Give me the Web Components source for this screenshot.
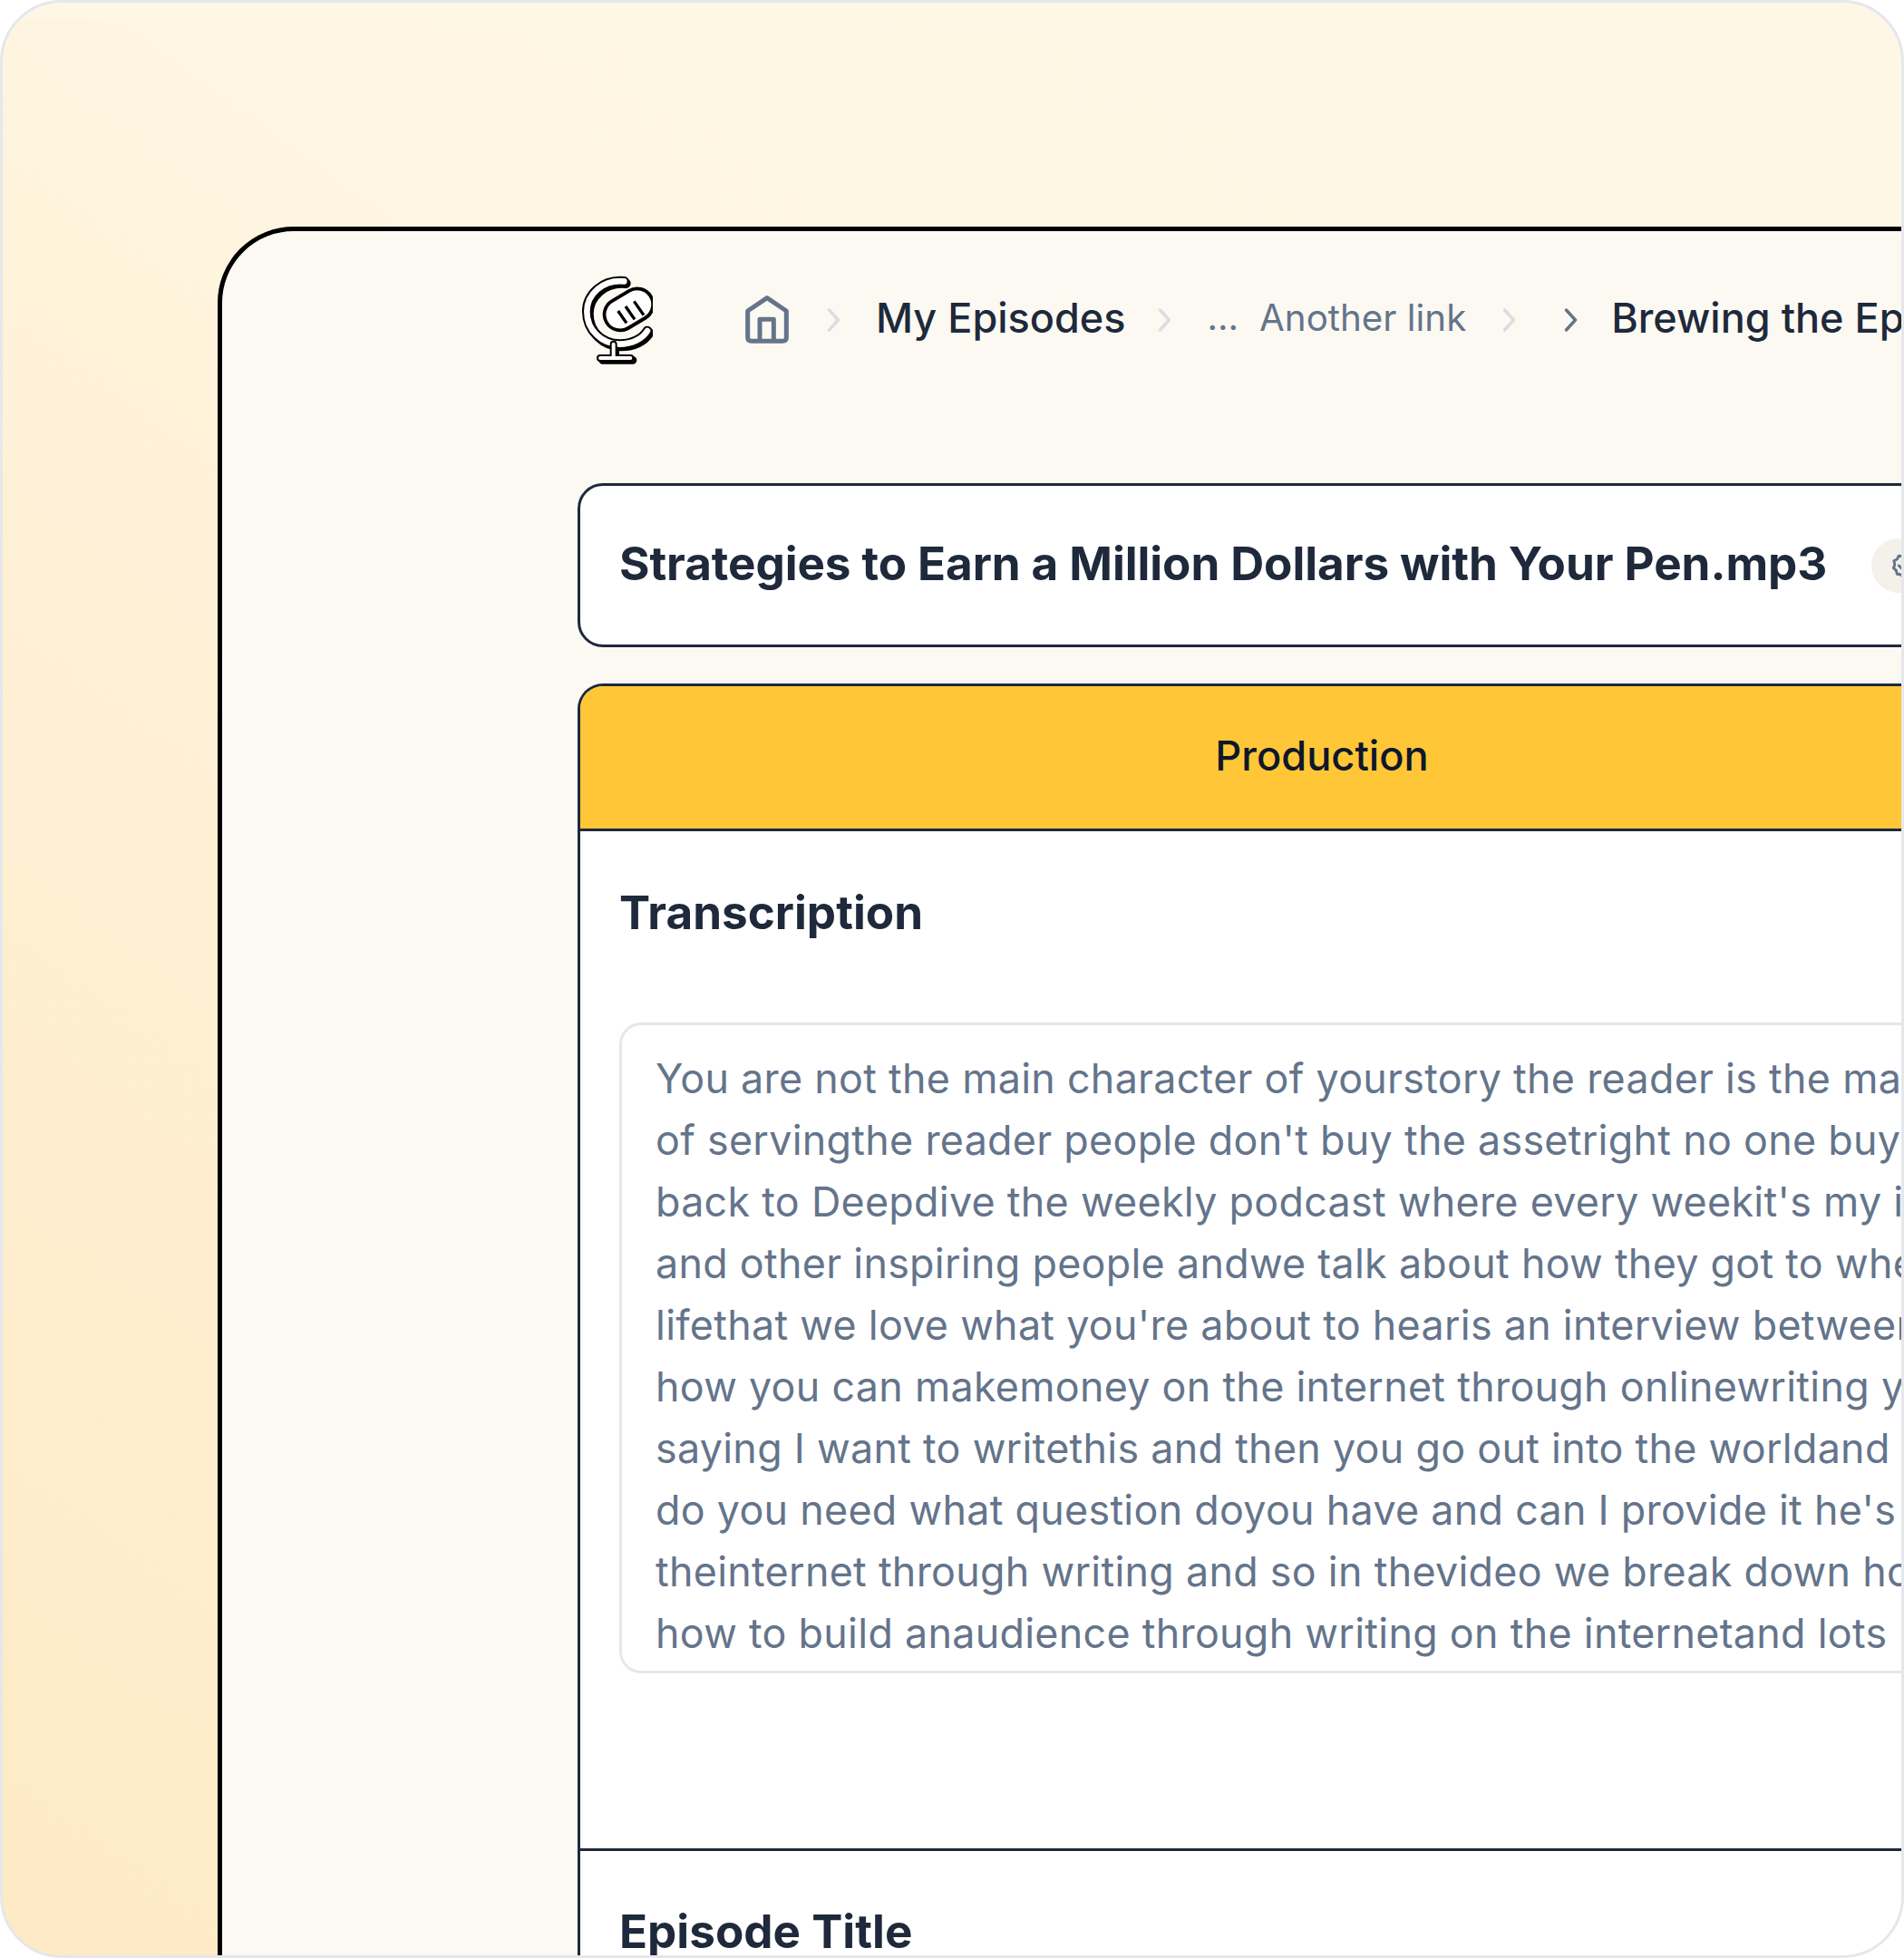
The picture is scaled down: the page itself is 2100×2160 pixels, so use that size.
<!DOCTYPE html>
<html>
	<head>
		<meta charset="utf-8">
		<title>Episode - Production</title>
		<style>
			html, body {
				margin: 0;
				background: #fff;
			}
		</style>
	</head>
	<body>

		<app-frame>
			<app-window>
				<top-nav>
					<nav-crumb tone="strong" slot="first">My Episodes</nav-crumb>
					<nav-crumb tone="muted" slot="second">Another link</nav-crumb>
					<nav-crumb tone="strong" slot="third">Brewing the Episode</nav-crumb>
				</top-nav>
				<file-title>Strategies to Earn a Million Dollars with Your Pen.mp3</file-title>
				<tab-card label="Production">
					<card-section heading="Transcription">
						<transcript-box>
							<span>You are not the main character of yourstory the reader is the main character</span>
							<span>of servingthe reader people don't buy the assetright no one buys the asset</span>
							<span>back to Deepdive the weekly podcast where every weekit's my interview</span>
							<span>and other inspiring people andwe talk about how they got to where</span>
							<span>lifethat we love what you're about to hearis an interview between</span>
							<span>how you can makemoney on the internet through onlinewriting you</span>
							<span>saying I want to writethis and then you go out into the worldand say</span>
							<span>do you need what question doyou have and can I provide it he's</span>
							<span>theinternet through writing and so in thevideo we break down how</span>
							<span>how to build anaudience through writing on the internetand lots</span>
						</transcript-box>
					</card-section>
					<card-section heading="Episode Title"></card-section>
				</tab-card>
			</app-window>
		</app-frame>

		<script>
			const FONT = 'Inter, "Liberation Sans", sans-serif';

			// Small helper so every element sets up its shadow root the same way
			class BaseElement extends HTMLElement {
				constructor () {
					super();
					this.root = this.attachShadow({mode: 'open'});
				}
			}

			class AppFrame extends BaseElement {
				connectedCallback () {
					this.root.innerHTML = `
						<style>
							:host {
								display: block;
								box-sizing: border-box;
								width: 2100px;
								height: 2160px;
								border: 3px solid #e5e7eb;
								border-radius: 68px;
								overflow: hidden;
								font-family: ${FONT};
								background:
									linear-gradient(180deg, #fff7e6 0, #fff7e6 17px, rgba(255,247,230,0) 18px),
									linear-gradient(36deg, #feeac5 0%, #fff0d4 38%, #fff2d9 50%, #fef6e3 62%, #fef7e5 100%);
							}
							.inner {
								padding: 247px 0 0 237px;
							}
						</style>
						<div class="inner"><slot></slot></div>`;
				}
			}

			class AppWindow extends BaseElement {
				connectedCallback () {
					this.root.innerHTML = `
						<style>
							:host {
								display: block;
								box-sizing: border-box;
								width: 2400px;
								height: 2200px;
								border: 5px solid #000;
								border-radius: 84px;
								background: #fcf9f2;
								padding: 48px 0 0 392px;
							}
						</style>
						<slot></slot>`;
				}
			}

			class TopNav extends BaseElement {
				connectedCallback () {
					const chevron = (color, gap) => `
						<svg class="chev" style="margin-right:${gap}px" width="16" height="26" viewBox="0 0 16 26" fill="none" stroke="${color}" stroke-width="3.4" stroke-linecap="round" stroke-linejoin="round"><path d="M2.5 2l10 11-10 11"/></svg>`;
					const arc = 'M205 92C135 85 82 135 82 192c0 62 50 108 108 108 42 0 76-18 92-44';
					this.root.innerHTML = `
						<style>
							:host {
								display: flex;
								align-items: center;
								height: 100px;
								margin-bottom: 130px;
								white-space: nowrap;
							}
							.logo { margin-left: 3px; margin-right: 102px; }
							.home { margin-right: 42px; }
							.chev { flex: none; }
							.dots {
								color: #64748b;
								font-size: 40px;
								margin-right: 23px;
								padding-bottom: 6px;
								line-height: 1;
							}
						</style>
						<svg class="logo" width="80" height="100" viewBox="60 70 240 300" fill="none">
							<g transform="translate(6 7)" stroke="#000" stroke-linecap="round">
								<path d="${arc}" stroke-width="32"/>
								<path d="M170 300v40M128 346h100" stroke-width="26"/>
							</g>
							<path d="${arc}" stroke="#000" stroke-width="32" stroke-linecap="round"/>
							<path d="${arc}" stroke="#fff" stroke-width="20" stroke-linecap="round"/>
							<path d="M170 300v40M126 346h100" stroke="#000" stroke-width="24" stroke-linecap="round"/>
							<path d="M170 300v40M126 346h100" stroke="#fff" stroke-width="12" stroke-linecap="round"/>
							<rect x="-85" y="-52" width="170" height="104" rx="52" transform="translate(224 190) rotate(-31)" fill="#000"/>
							<rect x="-85" y="-52" width="170" height="104" rx="52" transform="translate(220 185) rotate(-31)" fill="#fff" stroke="#000" stroke-width="11"/>
							<path d="M185 190l28 40M210 175l30 43M238 158l32 46" stroke="#000" stroke-width="10"/>
						</svg>
						<svg class="home" width="48" height="54" viewBox="608 135 144 160" fill="none" stroke="#64748b" stroke-width="15" stroke-linejoin="round">
							<path d="M616 185L680 142l64 43v88q0 12-12 12H628q-12 0-12-12z"/>
							<path d="M656 285v-72h46v72"/>
						</svg>
						${chevron('#d8dde3', 38)}
						<slot name="first"></slot>
						<span style="width:36px"></span>
						${chevron('#d8dde3', 38)}
						<span class="dots">...</span>
						<slot name="second"></slot>
						<span style="width:40px"></span>
						${chevron('#d8dde3', 52)}
						${chevron('#64748b', 36)}
						<slot name="third"></slot>`;
				}
			}

			class NavCrumb extends BaseElement {
				connectedCallback () {
					const strong = this.getAttribute('tone') === 'strong';
					this.root.innerHTML = `
						<style>
							:host {
								display: inline-block;
								padding-bottom: 6px;
								color: ${strong ? '#1e293b' : '#64748b'};
								font-size: ${strong ? 45 : 40.3}px;
								font-weight: ${strong ? 500 : 400};
							}
						</style>
						<slot></slot>`;
				}
			}

			class FileTitle extends BaseElement {
				connectedCallback () {
					this.root.innerHTML = `
						<style>
							:host {
								display: flex;
								align-items: center;
								box-sizing: border-box;
								width: 1642px;
								height: 181px;
								padding: 0 43px 5px;
								margin-bottom: 40px;
								background: #fff;
								border: 3px solid #1e293b;
								border-radius: 28px;
								color: #1e293b;
								font-size: 51.2px;
								letter-spacing: -0.08px;
								font-weight: 700;
								white-space: nowrap;
							}
							.badge {
								flex: none;
								display: flex;
								align-items: center;
								justify-content: center;
								width: 70px;
								height: 60px;
								margin-left: 49px;
								margin-bottom: -5px;
								border-radius: 30px;
								background: #f3f1ea;
							}
						</style>
						<slot></slot>
						<span class="badge">
							<svg width="32" height="32" viewBox="0 0 24 24" fill="none" stroke="#64748b" stroke-width="2.2" stroke-linecap="round" stroke-linejoin="round">
								<path d="M12 2.5l2.6 1.6 3-.3 1.3 2.7 2.6 1.5-.6 3 1 2.9-2.2 2-.7 2.9-3 .4L12 21.5l-2-2.2-3-.4-.7-2.9-2.2-2 1-2.9-.6-3 2.6-1.5 1.3-2.7 3 .3z"/>
								<path d="M8.5 12l2.5 2.5 4.5-4.5"/>
							</svg>
						</span>`;
				}
			}

			class TabCard extends BaseElement {
				connectedCallback () {
					this.root.innerHTML = `
						<style>
							:host {
								display: block;
								box-sizing: border-box;
								width: 1642px;
								background: #fff;
								border: 3px solid #1e293b;
								border-bottom: 0;
								border-radius: 28px 28px 0 0;
								overflow: hidden;
							}
							.tab {
								display: flex;
								align-items: center;
								justify-content: center;
								box-sizing: border-box;
								height: 160px;
								padding-bottom: 5px;
								background: #ffc738;
								border-bottom: 3px solid #1e293b;
								color: #0f172a;
								font-size: 45.2px;
								font-weight: 500;
							}
						</style>
						<div class="tab">${this.getAttribute('label')}</div>
						<slot></slot>`;
				}
			}

			class CardSection extends BaseElement {
				connectedCallback () {
					this.root.innerHTML = `
						<style>
							:host {
								display: block;
								box-sizing: border-box;
								padding: 58px 43px 0;
								min-height: 200px;
							}
							:host(:not(:last-child)) {
								height: 1125px;
								padding-top: 59px;
								border-bottom: 3px solid #1e293b;
							}
							h2 {
								margin: 0 0 92px;
								color: #1e293b;
								font-size: 51.2px;
								font-weight: 700;
								line-height: 60px;
							}
						</style>
						<h2>${this.getAttribute('heading')}</h2>
						<slot></slot>`;
				}
			}

			class TranscriptBox extends BaseElement {
				connectedCallback () {
					this.root.innerHTML = `
						<style>
							:host {
								display: block;
								box-sizing: border-box;
								height: 718px;
								padding: 25px 37px 0;
								border: 3px solid #e5e7eb;
								border-radius: 24px;
								overflow: hidden;
								color: #64748b;
								font-size: 44.8px;
								letter-spacing: 0.3px;
								line-height: 68px;
								white-space: nowrap;
							}
							::slotted(span) {
								display: block;
							}
						</style>
						<slot></slot>`;
				}
			}

			customElements.define('app-frame', AppFrame);
			customElements.define('app-window', AppWindow);
			customElements.define('top-nav', TopNav);
			customElements.define('nav-crumb', NavCrumb);
			customElements.define('file-title', FileTitle);
			customElements.define('tab-card', TabCard);
			customElements.define('card-section', CardSection);
			customElements.define('transcript-box', TranscriptBox);
		</script>
	</body>
</html>
